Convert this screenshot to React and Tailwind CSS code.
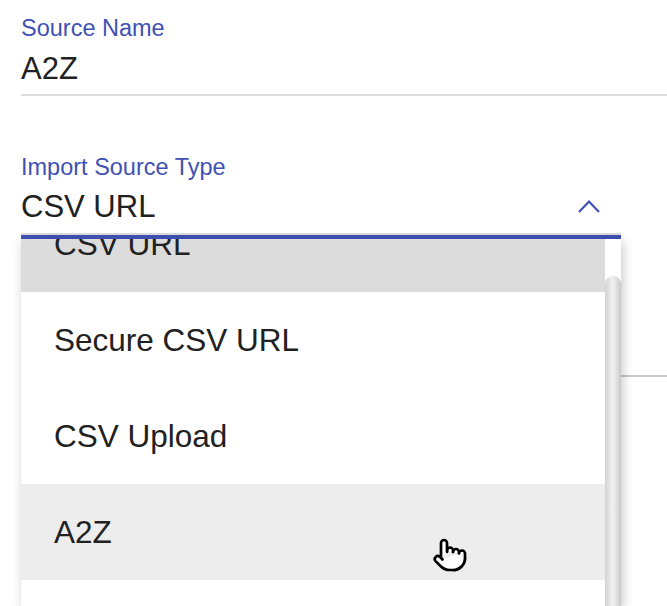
import React from "react";
import { Pointer } from "lucide-react";

const items = [
  { label: "CSV URL", cls: "bg-[#dcdcdc]" },
  { label: "Secure CSV URL", cls: "bg-white" },
  { label: "CSV Upload", cls: "bg-white" },
  { label: "A2Z", cls: "bg-[#ededed]" },
];

export default function App() {
  return (
    <div
      className="relative w-[667px] h-[606px] overflow-hidden bg-white"
      style={{ fontFamily: '"Liberation Sans", Arial, Helvetica, sans-serif' }}
    >
      <div className="pl-[21px] pt-[17px] flex flex-col">
        {/* Source Name */}
        <div className="flex flex-col">
          <div className="text-[23.5px] leading-[23.5px] text-[#3f51b5]">Source Name</div>
          <div className="mt-[12px] text-[31px] leading-[31px] text-[#212121]">A2Z</div>
          <div className="mt-[10.5px] h-[2px] bg-[#dfdfdf]" />
        </div>

        {/* Import Source Type */}
        <div className="mt-[60px] flex flex-col w-[600px]">
          <div className="text-[23.5px] leading-[23.5px] text-[#3f51b5]">Import Source Type</div>
          <div className="mt-[11px] flex items-center justify-between">
            <span className="text-[31px] leading-[31px] text-[#212121]">CSV URL</span>
            <svg width="24" height="16" viewBox="0 0 24 16" className="mr-[20px] mt-[2px]">
              <polyline points="2,13 12,2.5 22,13" fill="none" stroke="#3f51b5" strokeWidth="2.2" />
            </svg>
          </div>
          <div className="mt-[11px] h-[2px] bg-[#dcdcdc]" />
          <div className="h-[4px] bg-[#3f51b5]" />
        </div>

        {/* Next field (behind menu) */}
        <div className="mt-[136px] h-[2px] bg-[#c8c8c8]" />
      </div>

      {/* Dropdown menu */}
      <div className="absolute left-[21px] top-[239px] w-[600px] h-[367px] bg-white shadow-[2px_3px_10px_rgba(0,0,0,0.22)] flex overflow-hidden">
        <div className="w-[584px] flex flex-col mt-[-43px]">
          {items.map((it) => (
            <div
              key={it.label}
              className={`h-[96px] shrink-0 flex items-center pl-[33px] text-[31.5px] leading-[32px] text-[#212121] ${it.cls}`}
            >
              {it.label}
            </div>
          ))}
        </div>
        <div className="w-[16px] flex flex-col bg-white">
          <div className="mt-[37px] flex-1 rounded-t-full bg-gradient-to-r from-[#d2d2d2] via-[#f1f1f1] to-[#d0d0d0] border-r border-[#c8c8c8]" />
        </div>
      </div>

      {/* Cursor */}
      <div className="absolute left-[432px] top-[537px]">
        <Pointer size={36} fill="white" stroke="black" strokeWidth={1.8} />
      </div>
    </div>
  );
}
